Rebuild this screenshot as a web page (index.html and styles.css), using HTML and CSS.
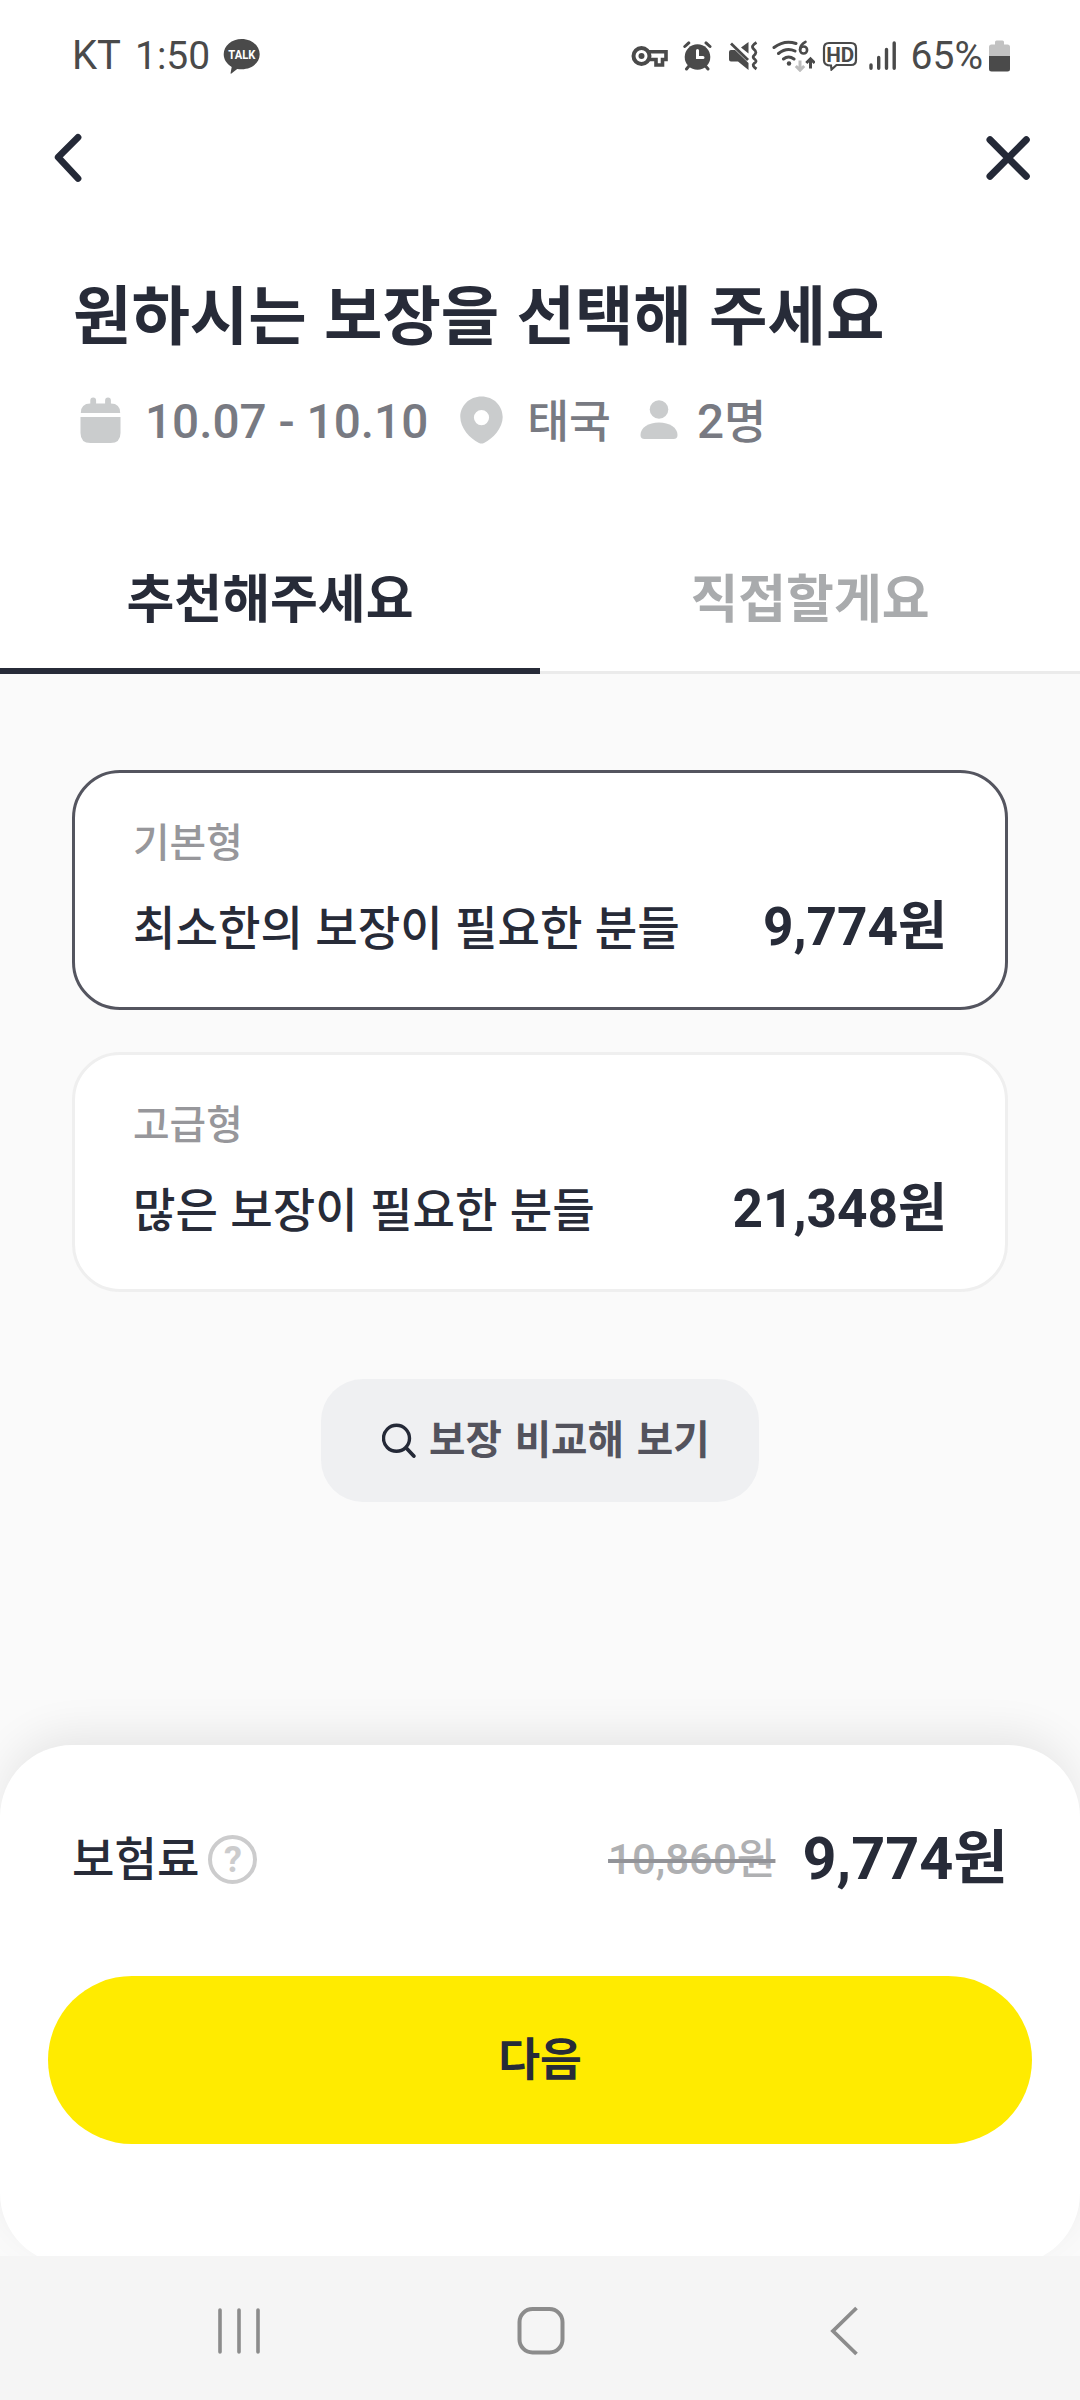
FILE: index.html
```html
<!DOCTYPE html>
<html lang="ko">
<head>
<meta charset="utf-8">
<title>여행자보험</title>
<link rel="stylesheet" href="styles.css">
</head>
<body>
<div class="screen">
  <div class="status">
    <span class="carrier">KT</span>
    <span class="clock">1:50</span>
    <svg class="talk" width="37" height="37" viewBox="215 38 37 37"><path fill="#4a4a4a" d="M233.700 39c10 0 18 6.800 18 15.300s-8 15-18 15c-1.600 0-3.100-.1-4.500-.4l-5.800 4.700c-.6.400-1 .1-.8-.6l1.100-6.100c-4.800-2.700-8-7.200-8-12.600 0-8.500 8-15.300 18-15.300z"/><text x="233.800" y="59" text-anchor="middle" textLength="27" lengthAdjust="spacingAndGlyphs" class="talk-text">TALK</text></svg>
    <div class="tray">
      <svg width="38" height="24" viewBox="631 44 38 24" fill="none" stroke="#4a4a4a"><circle cx="641.500" cy="56" r="8" stroke-width="4"/><circle cx="641.500" cy="56" r="3" fill="#4a4a4a" stroke="none"/><path stroke-width="3.600" d="M649 51.800H666V59.500H662.500V65H656V59.500H649"/></svg>
      <svg width="30" height="30" viewBox="683 41 30 30"><circle cx="697.500" cy="57" r="12.800" fill="#4a4a4a"/><g fill="none" stroke="#4a4a4a" stroke-width="3" stroke-linecap="round"><path d="M684.800 46.500l4-3.600M710 46.500l-4-3.600M689 66l-2.500 3M705.500 66l2.500 3"/><path stroke="#fff" d="M697.500 50.500V57.500H703"/></g></svg>
      <svg width="31" height="30" viewBox="728 41 31 30" fill="#4a4a4a"><path d="M741 47.500L748.500 42V53.500zM729 52q0-2 2-2h4L748.500 63V70L738 61.500h-7q-2 0-2-2z"/><path d="M731 43.500L748 60" stroke="#4a4a4a" stroke-width="2.800"/><path fill="none" stroke="#4a4a4a" stroke-width="2.800" d="M756.500 42.500q-6.500 3.800-2.500 6.800t-.5 6.700q-1 1.500 1.500 3.500t-1 4q-2.500 2 2.500 5.500"/></svg>
      <svg width="43" height="32" viewBox="772 40 43 32" fill="none" stroke="#4a4a4a" stroke-width="3" stroke-linecap="round"><path d="M774 47.500q10.500-8 22-4M778.500 53.500q8-6.500 16.500-2.500M783.500 59q5-4 10.500 0"/><circle cx="789" cy="63.500" r="2.200" fill="#4a4a4a" stroke="none"/><path stroke-width="2.600" d="M805.500 41.800q-5.500 3-5.500 8"/><circle cx="803.600" cy="50" r="3.500" stroke-width="2.600"/><path stroke="#bdbdbd" stroke-linecap="butt" d="M800 60.500V70M795.800 66l4.200 4.200 4.200-4.200"/><path stroke-linecap="butt" d="M810.500 68.500V59M806.300 63l4.200-4.200 4.200 4.200"/></svg>
      <svg width="36" height="30" viewBox="822 41 36 30"><path fill="none" stroke="#4a4a4a" stroke-width="2.200" d="M829 43H851q5 0 5 5V60q0 5-5 5H836.500L831.500 69.500 831 65.500q-7 0-7-5V48q0-5 5-5z"/><text x="840.200" y="61.500" text-anchor="middle" textLength="28" lengthAdjust="spacingAndGlyphs" class="hd-text">HD</text></svg>
      <svg width="28" height="30" viewBox="869 41 28 30" stroke="#4a4a4a" stroke-width="3.400" stroke-linecap="round"><path d="M871 65V68.200M878.700 57.500V68.200M886.500 49.500V68.200M894.200 43V68.200"/></svg>
      <span class="percent">65%</span>
      <svg class="battery" width="21" height="32" viewBox="989 40 21 32"><path fill="#c2c2c2" d="M989 56V47q0-2.500 2.500-2.500H995V42q0-1.500 1.500-1.500h6q1.500 0 1.500 1.500v2.500h3.500q2.500 0 2.500 2.500v9z"/><path fill="#4a4a4a" d="M989 56h21v13q0 2.500-2.500 2.500h-16q-2.500 0-2.500-2.500z"/></svg>
    </div>
  </div>

  <div class="topbar">
    <svg width="28" height="50" viewBox="54 133 28 50" fill="none" stroke="#242937" stroke-width="6.800" stroke-linecap="round" stroke-linejoin="round"><path d="M78 137.300L58.200 157.200 78 178.500"/></svg>
    <svg width="46" height="46" viewBox="985 135 46 46" fill="none" stroke="#242937" stroke-width="7" stroke-linecap="round"><path d="M990 139.800L1026.300 176.300M1026.300 139.800L990 176.300"/></svg>
  </div>

  <h1 class="title">원하시는 보장을 선택해 주세요</h1>
  <div class="meta">
    <svg width="41" height="47" viewBox="80 397 41 47" fill="#cacccd"><path d="M80.800 413q0-9.500 9.500-9.500V400.500a2.900 2.900 0 0 1 5.800 0v3h9V400.500a2.900 2.900 0 0 1 5.800 0v3q9.300 0 9.300 9.500zM80.500 417h40v16q0 10-10 10H90.500q-10 0-10-10z"/></svg>
    <span class="dates">10.07 - 10.10</span>
    <svg class="pin" width="43" height="48" viewBox="460 396 43 48"><path fill="#cacccd" fill-rule="evenodd" d="M481.500 396.500c12 0 21.200 9 21.200 20.500 0 11-9.500 21.500-18.700 26q-2.500 1.200-5 0c-9.200-4.500-18.700-15-18.700-26 0-11.500 9.200-20.500 21.200-20.500zM481.500 410a7.600 7.600 0 1 0 0 15.200 7.600 7.600 0 0 0 0-15.200z"/></svg>
    <span class="place">태국</span>
    <svg class="person" width="38" height="40" viewBox="640 402 38 40" fill="#cacccd"><circle cx="659" cy="411.500" r="9.300"/><path d="M640.500 437c0-7.500 8-12.500 18.500-12.500s18.500 5 18.500 12.500q0 4-4 4H644.500q-4 0-4-4z"/></svg>
    <span class="people">2<span class="unit">명</span></span>
  </div>

  <div class="tabs">
    <div class="tab active">추천해주세요</div>
    <div class="tab">직접할게요</div>
  </div>

  <div class="content">
    <div class="card selected">
      <div class="kind">기본형</div>
      <div class="line"><span class="desc">최소한의 보장이 필요한 분들</span><span class="price">9,774원</span></div>
    </div>
    <div class="card">
      <div class="kind">고급형</div>
      <div class="line"><span class="desc">많은 보장이 필요한 분들</span><span class="price">21,348원</span></div>
    </div>
    <div class="compare">
      <svg width="34" height="36" viewBox="382 1423 34 36" fill="none" stroke="#242937" stroke-linecap="round"><circle cx="396.500" cy="1438.300" r="13" stroke-width="3.400"/><path stroke-width="3.800" d="M406.500 1448.300L413.800 1456"/></svg>
      <span class="compare-text">보장 비교해 보기</span>
    </div>
    <div class="sheet">
      <div class="fee">
        <span class="fee-label">보험료</span>
        <span class="help">?</span>
        <s class="before">10,860원</s>
        <span class="after">9,774원</span>
      </div>
      <div class="next">다음</div>
    </div>
  </div>

  <div class="navbar">
    <svg width="44" height="50" viewBox="217 2306 44 50" stroke="#8c8c8c" stroke-width="3.600" stroke-linecap="round"><path d="M220 2310V2352M239 2310V2352M258 2310V2352"/></svg>
    <svg class="home" width="48" height="50" viewBox="517 2306 48 50"><rect x="519.500" y="2309" width="43" height="43.500" rx="13" fill="none" stroke="#8c8c8c" stroke-width="4"/></svg>
    <svg class="back" width="28" height="50" viewBox="830 2306 28 50" fill="none" stroke="#8c8c8c" stroke-width="3.800"><path d="M856.500 2308L833 2331 856.500 2354"/></svg>
  </div>
</div>
</body>
</html>
```
FILE: styles.css
```css
* { box-sizing: border-box; }
body { margin: 0; background: #fff; font-family: Roboto, "Noto Sans CJK KR", sans-serif; color: #272b38; }
svg { display: block; flex: none; }
.screen { width: 1080px; height: 2400px; display: flex; flex-direction: column; overflow: hidden; background: #fff; white-space: nowrap; }

.status { height: 112px; padding: 0 70px 0 72px; display: flex; align-items: center; color: #4a4a4a; font-size: 39px; line-height: 46px; }
.carrier { font-size: 40px; }
.clock { margin-left: 14px; }
.talk { margin-left: 13px; }
.talk-text { font: 700 13.500px Roboto, sans-serif; fill: #fff; }
.hd-text { font: 700 21px Roboto, sans-serif; fill: #4a4a4a; }
.tray { margin-left: auto; display: flex; align-items: center; }
.tray svg:nth-child(2) { margin-left: 14px; }
.tray svg:nth-child(3) { margin-left: 15px; }
.tray svg:nth-child(4) { margin-left: 13px; }
.tray svg:nth-child(5) { margin-left: 7px; }
.tray svg:nth-child(6) { margin-left: 11px; }
.percent { margin-left: 14px; }
.tray .battery { margin-left: 6px; }

.topbar { height: 92px; padding: 0 49px 0 54px; display: flex; justify-content: space-between; align-items: center; }

.title { margin: 74px 0 0 73px; font-size: 63.500px; line-height: 80px; font-weight: 700; word-spacing: 1.500px; }
.meta { margin: 22px 0 0 80px; height: 80px; display: flex; align-items: center; font-size: 47.700px; line-height: 60px; font-weight: 500; color: #787a82; }
.dates { margin-left: 24px; padding-top: 3px; }
.pin { margin-left: 32px; }
.place { margin-left: 24px; padding-top: 5px; font-size: 45.500px; }
.person { margin-left: 29px; }
.people { margin-left: 19px; padding-top: 3px; }
.unit { font-size: 46px; }

.tabs { margin-top: 62px; height: 152px; display: flex; }
.tab { flex: 1; border-bottom: 3px solid #ebebeb; text-align: center; font-size: 52px; font-weight: 700; line-height: 158px; color: #a9abad; }
.tab.active { border-bottom: 6px solid #272b38; color: #272b38; }

.content { height: 1582px; overflow: hidden; padding-top: 96px; background: #fafafa; display: flex; flex-direction: column; align-items: center; }
.card { flex: none; width: 936px; height: 240px; margin-bottom: 42px; padding: 41px 58px 0; border: 3px solid #efefef; border-radius: 48px; background: #fff; }
.card.selected { border-color: #54555f; }
.kind { font-size: 39.800px; line-height: 60px; font-weight: 500; color: #97979b; }
.line { height: 100px; display: flex; justify-content: space-between; align-items: center; }
.desc { font-size: 46.200px; font-weight: 500; word-spacing: .8px; }
.price { padding-bottom: 5px; font-size: 53.200px; font-weight: 700; }
.compare { flex: none; width: 438px; height: 123px; margin-top: 45px; padding-left: 61px; border-radius: 42px; background: #eff0f2; display: flex; align-items: center; gap: 13px; font-size: 39.600px; font-weight: 700; color: #53535d; }
.compare-text { padding-bottom: 8px; word-spacing: 3px; }

.sheet { flex: none; width: 1080px; height: 520px; margin-top: 243px; padding: 72px 48px 0; border-radius: 72px; background: #fff; box-shadow: 0 -15px 45px -6px rgba(0, 0, 0, .09); }
.fee { height: 84px; padding: 0 24px; display: flex; align-items: center; }
.fee-label { padding-bottom: 7px; font-size: 46.200px; font-weight: 500; }
.help { width: 49px; height: 49px; margin-left: 9px; border: 4px solid #cccccd; border-radius: 50%; font-size: 36px; line-height: 42px; font-weight: 700; text-align: center; color: #cccccd; }
.before { margin-left: auto; padding-bottom: 8px; font-size: 42px; font-weight: 500; color: #afb0b2; text-decoration: line-through 4px #929398; }
.after { margin-left: 27px; padding-bottom: 12px; font-size: 59.400px; font-weight: 700; }
.next { height: 168px; margin-top: 75px; border-radius: 84px; background: #ffeb00; text-align: center; font-size: 45.500px; line-height: 170px; font-weight: 700; }

.navbar { height: 144px; padding: 5px 222px 0 217px; background: #f5f5f5; display: flex; align-items: center; }
.home { margin-left: 256px; }
.back { margin-left: auto; }
```
